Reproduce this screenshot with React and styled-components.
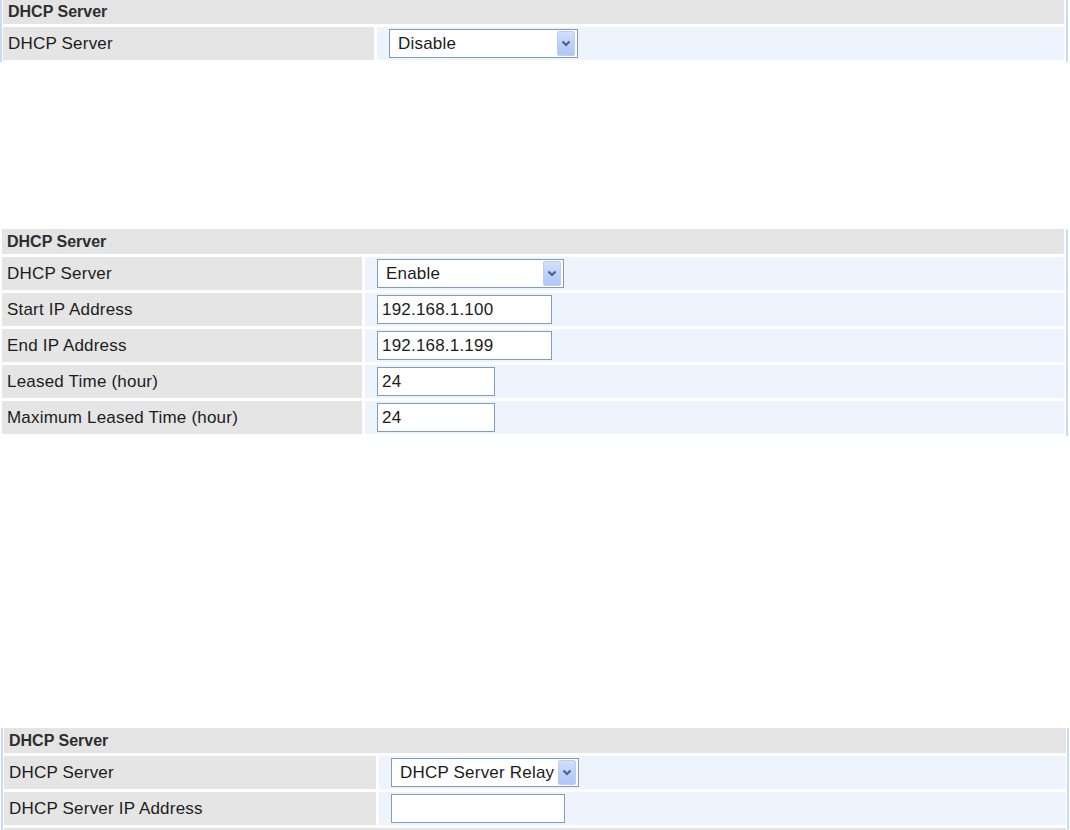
import React from 'react'
import styled, { createGlobalStyle } from 'styled-components'

const GlobalStyle = createGlobalStyle`
  html, body {
    margin: 0;
    padding: 0;
    background: #ffffff;
  }
  body {
    font-family: "Liberation Sans", Arial, sans-serif;
    letter-spacing: 0.2px;
    width: 1070px;
    height: 830px;
    overflow: hidden;
  }
`

const Page = styled.div`
  display: flex;
  flex-direction: column;
  width: 1070px;
`

const Section = styled.section`
  display: flex;
  width: 1068px;
  margin-top: ${p => p.$top}px;
  margin-left: ${p => p.$left}px;
`

const Rule = styled.div`
  flex: none;
  width: 2px;
  background: ${p => (p.$visible ? '#c8dbf2' : 'transparent')};
`

const Grid = styled.div`
  flex: 1;
  display: grid;
  grid-template-columns: ${p => p.$label}px 1fr;
  grid-template-rows: ${p => p.$head}px;
  grid-auto-rows: 33px;
  gap: 3px;
  margin: 0 ${p => p.$right}px 2px ${p => p.$inner}px;
`

const Header = styled.div`
  grid-column: 1 / -1;
  display: flex;
  align-items: center;
  padding-left: 5px;
  background: #e4e4e4;
  color: #2e2e2e;
  font-size: 16px;
  font-weight: bold;
  letter-spacing: 0;
`

const Label = styled.div`
  display: flex;
  align-items: center;
  padding: 1px 0 0 5px;
  background: #e5e5e5;
  color: #1c1c1c;
  font-size: 17px;
`

const Value = styled.div`
  display: flex;
  align-items: center;
  padding-left: 12px;
  background: #edf4fe;
`

const Footer = styled.div`
  grid-column: 1 / -1;
  background: #e4e4e4;
`

const SelectBox = styled.div`
  box-sizing: border-box;
  display: flex;
  align-items: center;
  width: ${p => p.$width}px;
  height: 29px;
  border: 1px solid #7f9db9;
  background: #ffffff;
  padding: 0 2px 0 8px;
  font-size: 17px;
  color: #1c1c1c;
  white-space: nowrap;
  overflow: hidden;
`

const SelectText = styled.span`
  flex: 1;
  overflow: hidden;
`

const ArrowButton = styled.span`
  flex: none;
  display: flex;
  align-items: center;
  justify-content: center;
  width: 18px;
  height: 25px;
  margin-left: 3px;
  border-radius: 2px;
  border: 1px solid #bccdf0;
  box-sizing: border-box;
  background: linear-gradient(180deg, #d3e0fb 0%, #bccffa 55%, #b0c6f7 100%);
`

const TextBox = styled.div`
  box-sizing: border-box;
  display: flex;
  align-items: center;
  width: ${p => p.$width}px;
  height: 29px;
  border: 1px solid #7f9db9;
  background: #ffffff;
  padding-left: 4px;
  font-size: 17px;
  color: #1c1c1c;
`

function Chevron() {
  return (
    <svg width="10" height="7" viewBox="0 0 10 7">
      <path d="M1.5 1.5 L5 5 L8.5 1.5" fill="none" stroke="#4d6185" strokeWidth="2.2" />
    </svg>
  )
}

function Select({ value, width }) {
  return (
    <SelectBox $width={width}>
      <SelectText>{value}</SelectText>
      <ArrowButton>
        <Chevron />
      </ArrowButton>
    </SelectBox>
  )
}

function Panel({ top, left, inner, right, label, head, leftRule, rows, footer }) {
  return (
    <Section $top={top} $left={left}>
      <Rule $visible={leftRule} />
      <Grid $label={label} $head={head} $inner={inner} $right={right}>
        <Header>DHCP Server</Header>
        {rows.map(row => (
          <React.Fragment key={row.label}>
            <Label>{row.label}</Label>
            <Value>{row.control}</Value>
          </React.Fragment>
        ))}
        {footer && <Footer />}
      </Grid>
      <Rule $visible />
    </Section>
  )
}

export default function App() {
  return (
    <Page>
      <GlobalStyle />
      <Panel
        top={0}
        left={0}
        inner={1}
        right={2}
        label={371}
        head={24}
        leftRule
        rows={[
          { label: 'DHCP Server', control: <Select value="Disable" width={189} /> },
        ]}
      />
      <Panel
        top={167}
        left={0}
        inner={0}
        right={2}
        label={360}
        head={25}
        rows={[
          { label: 'DHCP Server', control: <Select value="Enable" width={187} /> },
          { label: 'Start IP Address', control: <TextBox $width={175}>192.168.1.100</TextBox> },
          { label: 'End IP Address', control: <TextBox $width={175}>192.168.1.199</TextBox> },
          { label: 'Leased Time (hour)', control: <TextBox $width={118}>24</TextBox> },
          { label: 'Maximum Leased Time (hour)', control: <TextBox $width={118}>24</TextBox> },
        ]}
      />
      <Panel
        top={292}
        left={1}
        inner={1}
        right={1}
        label={372}
        head={25}
        leftRule
        footer
        rows={[
          { label: 'DHCP Server', control: <Select value="DHCP Server Relay" width={188} /> },
          { label: 'DHCP Server IP Address', control: <TextBox $width={174} /> },
        ]}
      />
    </Page>
  )
}
